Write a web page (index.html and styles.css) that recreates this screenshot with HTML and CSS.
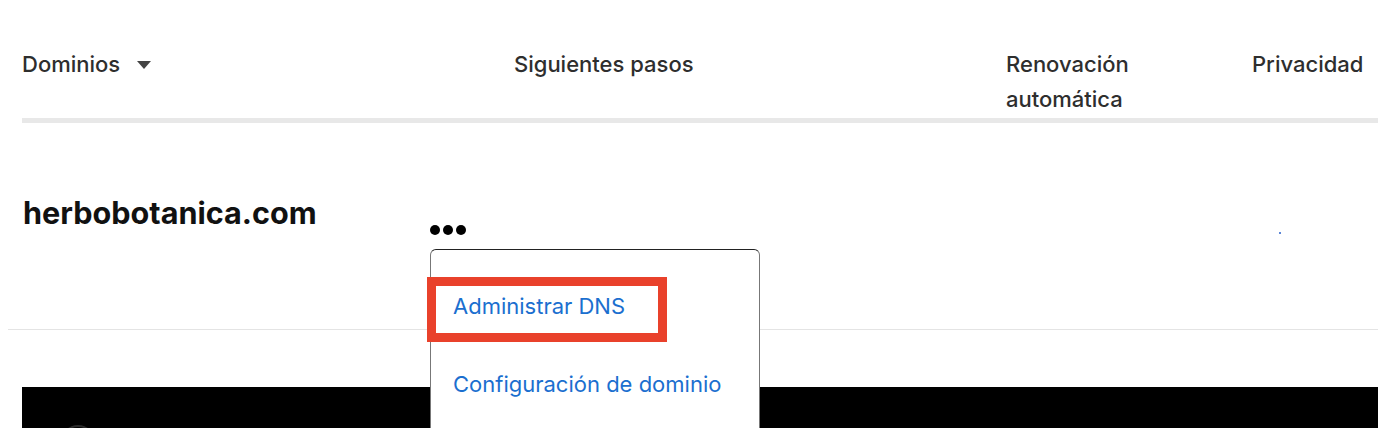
FILE: index.html
```html
<!DOCTYPE html>
<html lang="es">
<head>
    <meta charset="UTF-8">
    <meta name="viewport" content="width=device-width, initial-scale=1.0">
    <title>Mis dominios</title>
    <link rel="stylesheet" href="styles.css">
</head>
<body>
    <div class="domains">
        <div class="table-head">
            <div class="col col-domain">Dominios <span class="sort-arrow"></span></div>
            <div class="col">Siguientes pasos</div>
            <div class="col">Renovación<br>automática</div>
            <div class="col">Privacidad</div>
        </div>
    </div>

    <div class="domain-row">
        <div class="domain-name">herbobotanica.com</div>
        <div class="domain-actions">
            <button class="more-btn" aria-label="Más opciones">
                <span class="dot"></span><span class="dot"></span><span class="dot"></span>
            </button>
            <div class="menu">
                <a class="menu-item" href="#">Administrar DNS</a>
                <a class="menu-item" href="#">Configuración de dominio</a>
            </div>
            <div class="highlight"></div>
        </div>
        <span class="privacy-dot"></span>
    </div>

    <div class="banner">
        <span class="banner-glow"></span>
    </div>
</body>
</html>
```

FILE: styles.css
```css
/* Basic Styles */
body {
    font-family: Inter, "Open Sans", Arial, sans-serif;
    margin: 0;
    padding: 0;
    background-color: #fff;
    overflow: hidden;
}

.domains {
    padding-left: 22px;
}

.table-head {
    display: grid;
    grid-template-columns: 492px 492px 246px 1fr;
    padding-top: 47px;
    height: 71px;
    border-bottom: 5px solid #e8e8e8;
}

.table-head .col {
    font-size: 22px;
    font-weight: 500;
    line-height: 35px;
    color: #2e2e2e;
    padding-left: 0;
}

.sort-arrow {
    display: inline-block;
    width: 0;
    height: 0;
    margin-left: 11px;
    vertical-align: 3px;
    border-left: 7px solid transparent;
    border-right: 7px solid transparent;
    border-top: 8px solid #444;
}

.domain-row {
    display: flex;
    position: relative;
    margin-left: 8px;
    padding-left: 15px;
    padding-top: 72px;
    height: 134px;
    border-bottom: 1px solid #e4e4e4;
}

.domain-name {
    width: 407px;
    font-size: 30.6px;
    font-weight: 700;
    line-height: 36px;
    color: #111;
}

.domain-actions {
    position: relative;
    padding-top: 30px;
}

.more-btn {
    display: flex;
    gap: 3px;
    padding: 0;
    border: none;
    background: none;
    cursor: pointer;
}

.dot {
    width: 10px;
    height: 10px;
    border-radius: 50%;
    background-color: #000;
}

.menu {
    position: absolute;
    top: 54px;
    left: 0;
    z-index: 2;
    width: 330px;
    height: 200px;
    padding-top: 37px;
    background-color: #fff;
    border: 1px solid #777;
    border-top-color: #222;
    border-radius: 6px;
    box-sizing: border-box;
}

.menu-item {
    display: block;
    padding-left: 22px;
    font-size: 22px;
    line-height: 78px;
    margin-top: -20px;
    margin-bottom: 20px;
    color: #1b6fcf;
    text-decoration: none;
}

.highlight {
    position: absolute;
    top: 82px;
    left: -3px;
    z-index: 3;
    width: 240px;
    height: 65px;
    border: 9px solid #e9412b;
    box-sizing: border-box;
}

.privacy-dot {
    position: absolute;
    left: 1271px;
    top: 109px;
    width: 2px;
    height: 2px;
    background-color: #5b86d6;
}

.banner {
    position: relative;
    margin-top: 57px;
    margin-left: 22px;
    height: 120px;
    background-color: #000;
}

.banner-glow {
    position: absolute;
    left: 39px;
    top: 38px;
    width: 30px;
    height: 30px;
    border-radius: 50%;
    border: 2px solid #2a2a2a;
}
```
